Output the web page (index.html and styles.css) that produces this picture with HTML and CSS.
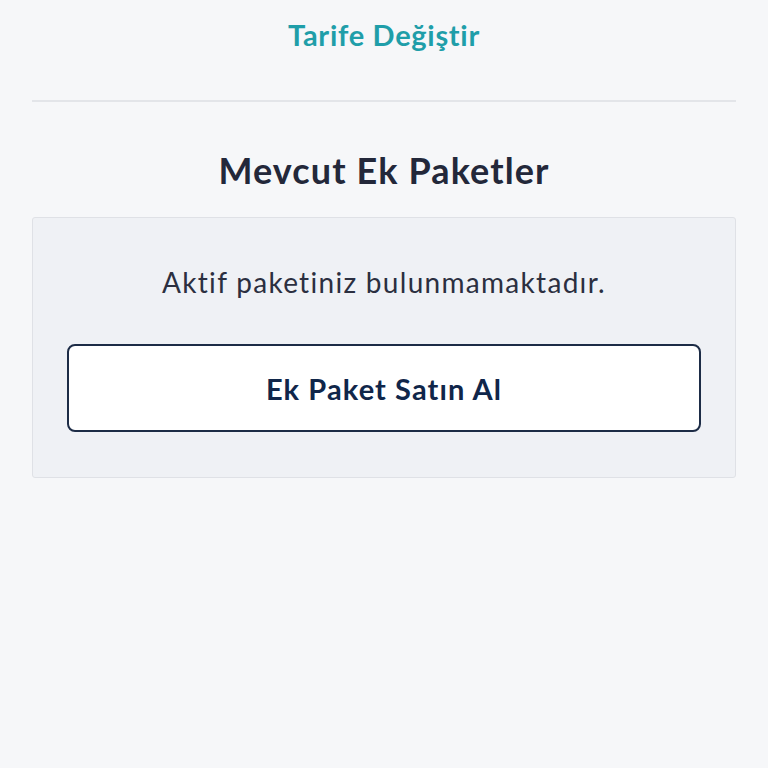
FILE: index.html
```html
<!DOCTYPE html>
<html lang="tr">
<head>
  <meta charset="UTF-8">
  <meta name="viewport" content="width=device-width, initial-scale=1.0">
  <title>Ek Paketler</title>
  <link rel="stylesheet" href="styles.css">
</head>
<body>

  <div class="packages-page">
    <!-- Tariff link -->
    <div class="tariff-row">
      <a href="#" class="tariff-link">Tarife Değiştir</a>
    </div>

    <!-- Current add-on packages -->
    <section class="addons">
      <h2 class="addons-title">Mevcut Ek Paketler</h2>
      <div class="addons-card">
        <p class="addons-empty">Aktif paketiniz bulunmamaktadır.</p>
        <button class="buy-btn">Ek Paket Satın Al</button>
      </div>
    </section>
  </div>

</body>
</html>
```

FILE: styles.css
```css
/* Ek Paketler */
body {
  font-family: Lato, "Open Sans", sans-serif;
  margin: 0;
  padding: 0;
  background-color: #f6f7f9;
}

.packages-page {
  padding: 0 32px;
}

.tariff-row {
  height: 102px;
  display: flex;
  justify-content: center;
  padding-top: 15px;
  box-sizing: border-box;
  border-bottom: 2px solid #e3e5e9;
}

.tariff-link {
  color: #1f9ea9;
  font-size: 29px;
  font-weight: bold;
  letter-spacing: 0.7px;
  text-decoration: none;
  line-height: 40px;
}

.addons-title {
  margin: 46px 0 25px;
  text-align: center;
  font-size: 36px;
  line-height: 44px;
  font-weight: bold;
  letter-spacing: 1.1px;
  color: #23283a;
}

.addons-card {
  background-color: #eff1f5;
  border: 1px solid #dfe1e6;
  border-radius: 3px;
  padding: 46px 34px 45px;
}

.addons-empty {
  margin: 0 0 44px;
  text-align: center;
  font-size: 28px;
  line-height: 36px;
  letter-spacing: 1.3px;
  color: #2b2f40;
}

.buy-btn {
  display: block;
  width: 100%;
  height: 88px;
  background-color: #fff;
  border: 2px solid #1d2c46;
  border-radius: 8px;
  font-family: inherit;
  font-size: 29px;
  font-weight: bold;
  letter-spacing: 1.1px;
  color: #10264a;
  cursor: pointer;
}
```
